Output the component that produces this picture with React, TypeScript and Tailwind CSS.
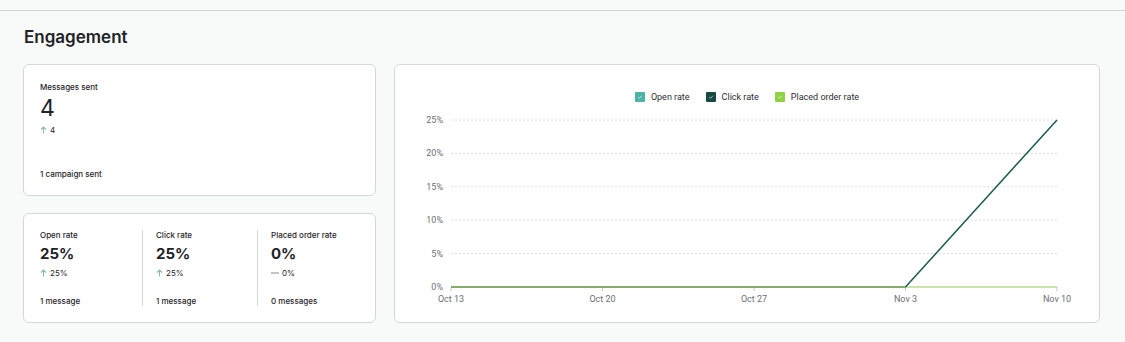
import React from "react";

const UpArrow = () => (
  <svg width="7" height="8" viewBox="0 0 7 8" className="inline-block">
    <path d="M3.5 7.5V1M1 3.5L3.5 1L6 3.5" stroke="#88b9b2" strokeWidth="1.1" fill="none" />
  </svg>
);

const Check = ({ color }: { color: string }) => (
  <span className="w-[10px] h-[10px] rounded-[1px] flex items-center justify-center" style={{ backgroundColor: color }}>
    <svg width="6" height="6" viewBox="0 0 6 6">
      <path d="M1.2 3.2L2.4 4.3L4.8 1.8" stroke="white" strokeOpacity="0.8" strokeWidth="0.8" fill="none" />
    </svg>
  </span>
);

function Metric({ label, value, delta, up, foot }: { label: string; value: string; delta: string; up: boolean; foot: string }) {
  return (
    <div className="flex flex-col h-full">
      <div className="text-[8px] font-medium text-[#1f2328] leading-[10px]">{label}</div>
      <div className="text-[15px] font-bold text-[#1f2328] leading-[18px] mt-[5px]">{value}</div>
      <div className="flex items-center gap-[3px] text-[8px] text-[#1f2328] leading-[10px] mt-[5px]">
        {up ? <UpArrow /> : <span className="inline-block w-[8px] h-[1.5px] bg-[#c4c4c4]" />}
        <span>{delta}</span>
      </div>
      <div className="flex-1" />
      <div className="text-[8px] font-medium text-[#1f2328] leading-[10px]">{foot}</div>
    </div>
  );
}

function Chart() {
  const y0 = 178;
  const step = 33.4;
  const xs = [56, 207.5, 359, 510.5, 662];
  const xl = ["Oct 13", "Oct 20", "Oct 27", "Nov 3", "Nov 10"];
  const yl = ["0%", "5%", "10%", "15%", "20%", "25%"];
  return (
    <svg width="705" height="200" viewBox="0 0 705 200" style={{ fontFamily: "Roboto, sans-serif" }}>
      {yl.map((l, i) => {
        const y = y0 - i * step;
        return (
          <g key={l}>
            {i > 0 && <line x1={56} x2={662} y1={y} y2={y} stroke="#dcdcdc" strokeWidth="1" strokeDasharray="2 2" />}
            <text x={48} y={y + 3} textAnchor="end" fontSize="9" fill="#6b6f73">{l}</text>
          </g>
        );
      })}
      {xs.map((x, i) => (
        <g key={x}>
          <line x1={x} x2={x} y1={y0} y2={y0 + 4} stroke="#c8c8c8" strokeWidth="1" />
          <text x={x} y={y0 + 15} textAnchor="middle" fontSize="9" fill="#6b6f73">{xl[i]}</text>
        </g>
      ))}
      <line x1={56} x2={662} y1={y0} y2={y0} stroke="#b7dd93" strokeWidth="1.5" />
      <line x1={56} x2={510.5} y1={y0} y2={y0} stroke="#6c9a55" strokeWidth="1.5" />
      <line x1={510.5} x2={662} y1={y0} y2={y0 - 5 * step} stroke="#1b5a50" strokeWidth="1.5" />
    </svg>
  );
}

export default function App() {
  return (
    <div className="w-[1125px] h-[342px] bg-[#f8faf9] overflow-hidden" style={{ fontFamily: "Inter, 'Noto Sans', sans-serif" }}>
      <div className="h-[10px]" />
      <div className="h-px bg-[#d2d4d3]" />
      <div className="px-[23px]">
        <h2 className="text-[17px] font-semibold text-[#1f2328] leading-[22px] mt-[15px] ml-px">Engagement</h2>
        <div className="flex gap-[18px] mt-[16px]">
          <div className="w-[353px] flex flex-col gap-[17px]">
            <div className="h-[132px] bg-white border border-[#d3d8d6] rounded-[6px] px-[16px] pt-[17px] pb-[16px] flex flex-col">
              <div className="text-[8px] font-medium text-[#1f2328] leading-[10px]">Messages sent</div>
              <div className="text-[23px] font-normal text-[#1f2328] leading-[26px] mt-[3px]">4</div>
              <div className="flex items-center gap-[3px] text-[8px] text-[#1f2328] leading-[10px] mt-[4px]">
                <UpArrow />
                <span>4</span>
              </div>
              <div className="flex-1" />
              <div className="text-[8px] font-medium text-[#1f2328] leading-[10px]">1 campaign sent</div>
            </div>
            <div className="h-[110px] bg-white border border-[#d3d8d6] rounded-[6px] px-[16px] py-[16px] flex">
              <div className="w-[102px]">
                <Metric label="Open rate" value="25%" delta="25%" up foot="1 message" />
              </div>
              <div className="w-[115px] border-l border-[#d3d6d5] pl-[13px]">
                <Metric label="Click rate" value="25%" delta="25%" up foot="1 message" />
              </div>
              <div className="flex-1 border-l border-[#d3d6d5] pl-[13px]">
                <Metric label="Placed order rate" value="0%" delta="0%" up={false} foot="0 messages" />
              </div>
            </div>
          </div>
          <div className="w-[706px] h-[259px] bg-white border border-[#d3d8d6] rounded-[6px] flex flex-col">
            <div className="flex justify-center items-center gap-[16px] pt-[26px] text-[9px] text-[#2b2f33] leading-[12px]" style={{ fontFamily: "Roboto, sans-serif" }}>
              <div className="flex items-center gap-[6px]"><Check color="#4db3a6" /><span>Open rate</span></div>
              <div className="flex items-center gap-[6px]"><Check color="#164a42" /><span>Click rate</span></div>
              <div className="flex items-center gap-[6px]"><Check color="#8ed345" /><span>Placed order rate</span></div>
            </div>
            <div className="mt-[6px]">
              <Chart />
            </div>
          </div>
        </div>
      </div>
    </div>
  );
}
